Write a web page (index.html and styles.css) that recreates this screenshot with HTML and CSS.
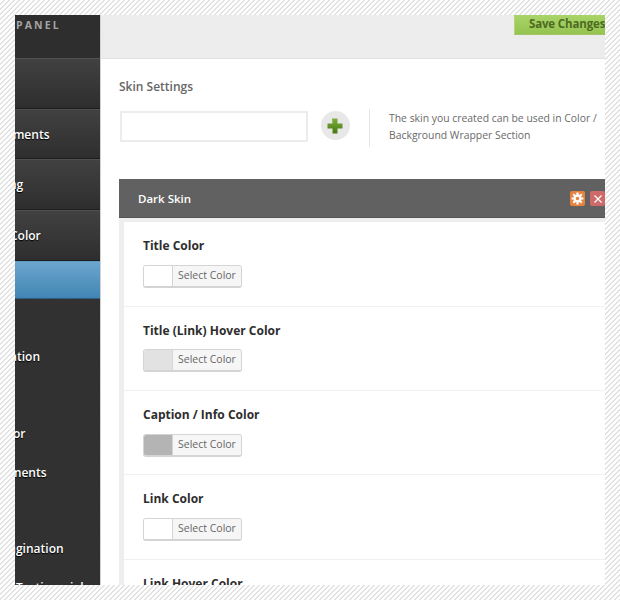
FILE: index.html
```html
<!DOCTYPE html>
<html lang="en">
<head>
<meta charset="utf-8">
<title>Skin Settings</title>
<link rel="stylesheet" href="styles.css">
</head>
<body>
<div class="frame">
  <aside class="sidebar">
    <div class="side-inner">
      <div class="brand">PANEL</div>
      <div class="nav-item"></div>
      <div class="nav-item"><span class="t-elements">ements</span></div>
      <div class="nav-item"><span class="t-ng">ng</span></div>
      <div class="nav-item"><span class="t-color">Color</span></div>
      <div class="nav-active"></div>
      <ul class="sub">
        <li></li>
        <li><span class="t-ation">ation</span></li>
        <li></li>
        <li><span class="t-or">or</span></li>
        <li><span class="t-ments">ments</span></li>
        <li></li>
        <li><span class="t-pag">agination</span></li>
        <li><span class="t-test">Testimonial</span></li>
      </ul>
    </div>
  </aside>
  <main class="main">
    <div class="topbar"><button class="save">Save Changes</button></div>
    <section class="settings">
      <h2 class="settings-title">Skin Settings</h2>
      <div class="create">
        <input class="skin-input" type="text">
        <span class="add">
          <svg width="18" height="18" viewBox="0 0 18 18"><defs><linearGradient id="g" x1="0" y1="0" x2="0" y2="1"><stop offset="0" stop-color="#7fae3c"/><stop offset="1" stop-color="#44780f"/></linearGradient></defs><path d="M6 1.500h5.500v5h5v5h-5v5h-5v-5h-5v-5h5z" fill="url(#g)"/></svg>
        </span>
        <p class="hint">The skin you created can be used in Color / Background Wrapper Section</p>
      </div>
    </section>
    <section class="skin">
      <header class="skin-head">
        <span class="skin-name">Dark Skin</span>
        <span class="tools">
          <span class="tool gear">
            <svg width="13" height="13" viewBox="0 0 12 12"><g stroke="#fff" stroke-width="2"><path d="M6 0.500v11M0.500 6h11M2.100 2.100l7.800 7.800M9.900 2.100l-7.800 7.800"/></g><circle cx="6" cy="6" r="3.600" fill="#fff"/><circle cx="6" cy="6" r="1.600" fill="#e8833f"/></svg>
          </span>
          <span class="tool close">
            <svg width="10" height="10" viewBox="0 0 10 10"><path d="M1.500 1.500l7 7M8.500 1.500l-7 7" stroke="#fff" stroke-width="1.200" fill="none"/></svg>
          </span>
        </span>
      </header>
      <div class="rows">
        <div class="row">
          <h3 class="row-title">Title Color</h3>
          <div class="picker"><span class="swatch s-white"></span><span class="pick-label">Select Color</span></div>
        </div>
        <div class="row">
          <h3 class="row-title">Title (Link) Hover Color</h3>
          <div class="picker"><span class="swatch s-light"></span><span class="pick-label">Select Color</span></div>
        </div>
        <div class="row">
          <h3 class="row-title">Caption / Info Color</h3>
          <div class="picker"><span class="swatch s-mid"></span><span class="pick-label">Select Color</span></div>
        </div>
        <div class="row">
          <h3 class="row-title">Link Color</h3>
          <div class="picker"><span class="swatch s-white"></span><span class="pick-label">Select Color</span></div>
        </div>
        <div class="row">
          <h3 class="row-title">Link Hover Color</h3>
        </div>
      </div>
    </section>
  </main>
</div>
</body>
</html>
```
FILE: styles.css
```css
* { box-sizing: border-box; }
html, body { margin: 0; height: 100%; }
body {
  padding: 15px;
  height: 600px;
  overflow: hidden;
  font-family: "Open Sans", sans-serif;
  background: repeating-linear-gradient(135deg, #fff 0, #fff 2.300px, #e2e2e2 2.300px, #e2e2e2 3.536px);
}
.frame {
  display: flex;
  width: 590px;
  height: 570px;
  overflow: hidden;
  background: #fff;
}
.sidebar {
  flex: 0 0 85px;
  overflow: hidden;
  background: repeating-linear-gradient(135deg, #2f2f2f 0, #2f2f2f 1.400px, #353535 1.400px, #353535 2.121px);
  color: #fff;
}
.side-inner { width: 85px; }
.brand {
  height: 43px;
  padding: 3px 0 0 1px;
  background: #2e2e2e;
  color: #a5a5a5;
  font-size: 10.500px;
  font-weight: 700;
  letter-spacing: 2.100px;
  line-height: 15px;
}
.nav-item {
  height: 50.700px;
  padding-top: 16px;
  background: linear-gradient(#414141, #2e2e2e);
  border-bottom: 1px solid #1d1d1d;
  border-top: 1px solid #505050;
  font-size: 12px;
  font-weight: 600;
  line-height: 17px;
  text-shadow: 0 1px 1px #000;
  white-space: nowrap;
}
.nav-active {
  height: 38.500px;
  background: linear-gradient(#6ba6cd, #4285b4);
  border-top: 1px solid #5e9bc3;
  border-bottom: 1px solid #2e5f83;
}
.sub {
  list-style: none;
  margin: 0;
  padding: 0.700px 0 0;
}
.sub li {
  height: 38.400px;
  padding-top: 10px;
  font-size: 12px;
  font-weight: 600;
  line-height: 17px;
  text-shadow: 0 1px 1px #000;
  white-space: nowrap;
}
.t-elements { margin-left: -9px; }
.t-ng { margin-left: -6px; }
.t-color { margin-left: -5px; }
.t-ation { margin-left: -5px; }
.t-or { margin-left: -2px; }
.t-ments { margin-left: -5px; }
.t-pag { margin-left: -6px; }
.t-test { margin-left: 1px; }

.main {
  flex: 1;
  min-width: 0;
  border-left: 1px solid #d2d2d2;
}
.topbar {
  display: flex;
  justify-content: flex-end;
  height: 44px;
  background: repeating-linear-gradient(135deg, #eeeeee 0, #eeeeee 1.400px, #e9e9e9 1.400px, #e9e9e9 2.121px);
  border-bottom: 1px solid #e2e2e2;
}
.save {
  width: 91px;
  height: 20px;
  padding: 0 0 2px 14px;
  border: 0;
  border-left: 1px solid #b4d67c;
  border-bottom: 1px solid #a2c46a;
  background: linear-gradient(#a9d468, #95c452);
  color: #4d6b21;
  font-family: "Open Sans", sans-serif;
  font-size: 11.500px;
  font-weight: 700;
  letter-spacing: -0.150px;
  line-height: 16px;
  text-align: left;
  white-space: nowrap;
  overflow: hidden;
}
.settings { padding: 0 0 0 18px; }
.settings-title {
  margin: 0;
  padding-top: 20px;
  color: #666;
  font-size: 12px;
  font-weight: 600;
  line-height: 16px;
}
.create {
  display: flex;
  align-items: flex-start;
  margin-top: 16px;
  height: 68px;
}
.skin-input {
  flex: 0 0 188px;
  width: 188px;
  height: 31px;
  margin: 0 0 0 1px;
  border: 2px solid #ececec;
  background: #fff;
}
.add {
  display: flex;
  align-items: center;
  justify-content: center;
  flex: 0 0 29px;
  width: 29px;
  height: 29px;
  margin-left: 12.500px;
  border-radius: 50%;
  background: #e8e8e8;
}
.hint {
  width: 236px;
  height: 38px;
  margin: -2px 0 0 19.500px;
  padding: 1px 0 0 19px;
  border-left: 1px solid #e6e6e6;
  color: #6a6a6a;
  font-size: 10.400px;
  line-height: 17px;
}
.skin { margin-left: 18px; }
.skin-head {
  display: flex;
  align-items: center;
  justify-content: space-between;
  height: 39px;
  padding: 0 0 0 19px;
  background: #616161;
  border-bottom: 1px solid #545454;
  color: #fff;
}
.skin-name {
  font-size: 11.500px;
  font-weight: 600;
}
.tools {
  display: flex;
  gap: 5px;
  margin-top: 1px;
}
.tool {
  display: flex;
  align-items: center;
  justify-content: center;
  width: 15px;
  height: 15px;
  border-radius: 2px;
}
.gear { background: #e8833f; }
.close { background: #cf6a6a; }
.rows {
  padding-top: 0.400px;
  border-top: 4px solid #eee;
  border-left: 5px solid #eee;
}
.row {
  height: 84.300px;
  padding: 15px 0 0 19px;
  border-bottom: 1px solid #f1f1f1;
}
.row-title {
  margin: 0;
  color: #2d2d2d;
  font-size: 12px;
  font-weight: 700;
  line-height: 18px;
}
.picker {
  display: flex;
  width: 99px;
  height: 23px;
  margin-top: 9.700px;
  border: 1px solid #d4d4d4;
  border-bottom-width: 2px;
  border-radius: 3px;
  overflow: hidden;
}
.swatch {
  flex: 0 0 29px;
  border-right: 1px solid #d4d4d4;
}
.s-white { background: #fff; }
.s-light { background: #e2e2e2; }
.s-mid { background: #b4b4b4; }
.pick-label {
  flex: 1;
  padding-left: 5px;
  background: #f6f6f6;
  color: #666;
  font-size: 10.500px;
  line-height: 19px;
  white-space: nowrap;
}
```
